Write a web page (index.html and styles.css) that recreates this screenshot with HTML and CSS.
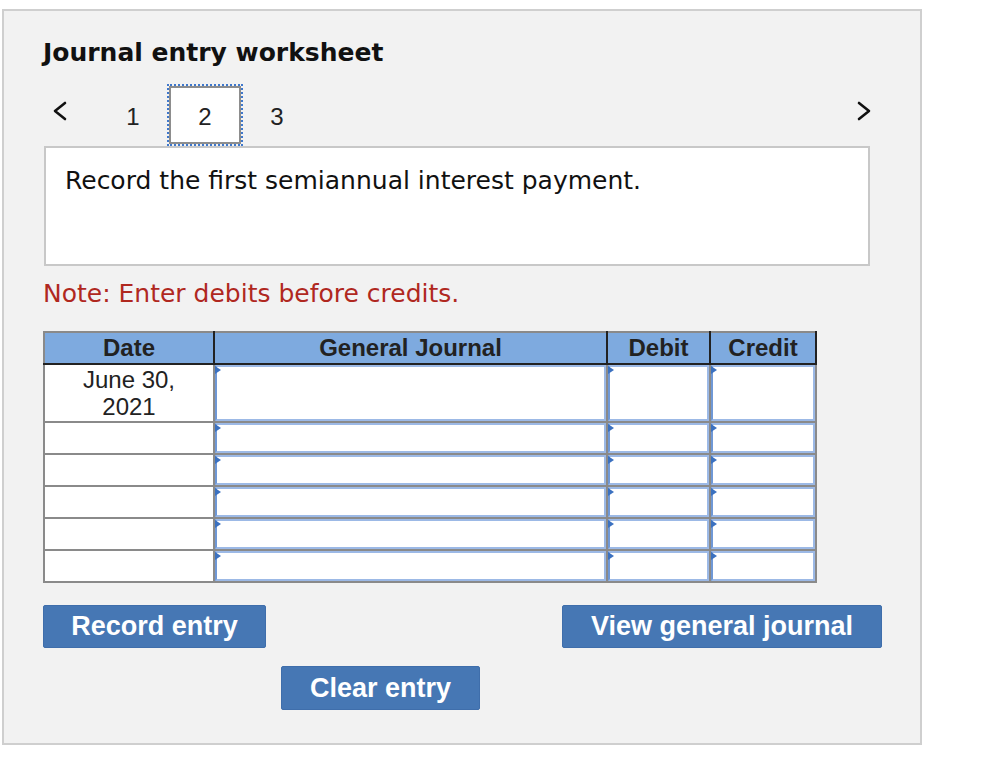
FILE: index.html
```html
<!DOCTYPE html>
<html>
<head>
<meta charset="utf-8">
<link rel="stylesheet" href="styles.css">
</head>
<body>
<div class="panel">
  <h1 class="title">Journal entry worksheet</h1>
  <div class="tabs">
    <span class="arrow prev"><svg width="16" height="20" viewBox="0 0 16 20"><path d="M13 2 L3 10 L13 18" fill="none" stroke="#111" stroke-width="2.6" stroke-linecap="round" stroke-linejoin="round"/></svg></span>
    <span class="tab">1</span>
    <span class="tab active">2</span>
    <span class="tab">3</span>
    <span class="arrow next"><svg width="16" height="20" viewBox="0 0 16 20"><path d="M3 2 L13 10 L3 18" fill="none" stroke="#111" stroke-width="2.6" stroke-linecap="round" stroke-linejoin="round"/></svg></span>
  </div>
  <div class="prompt">Record the first semiannual interest payment.</div>
  <p class="note">Note: Enter debits before credits.</p>
  <table class="journal">
    <colgroup>
      <col class="c-date"><col class="c-gj"><col class="c-dr"><col class="c-cr">
    </colgroup>
    <thead>
      <tr><th>Date</th><th>General Journal</th><th>Debit</th><th>Credit</th></tr>
    </thead>
    <tbody>
      <tr class="first"><td class="date">June 30,<br>2021</td><td><div class="inp"></div></td><td><div class="inp"></div></td><td><div class="inp"></div></td></tr>
      <tr><td class="date"></td><td><div class="inp"></div></td><td><div class="inp"></div></td><td><div class="inp"></div></td></tr>
      <tr><td class="date"></td><td><div class="inp"></div></td><td><div class="inp"></div></td><td><div class="inp"></div></td></tr>
      <tr><td class="date"></td><td><div class="inp"></div></td><td><div class="inp"></div></td><td><div class="inp"></div></td></tr>
      <tr><td class="date"></td><td><div class="inp"></div></td><td><div class="inp"></div></td><td><div class="inp"></div></td></tr>
      <tr><td class="date"></td><td><div class="inp"></div></td><td><div class="inp"></div></td><td><div class="inp"></div></td></tr>
    </tbody>
  </table>
  <div class="btn-row">
    <button class="btn record">Record entry</button>
    <button class="btn view">View general journal</button>
  </div>
  <div class="btn-row second">
    <button class="btn clear">Clear entry</button>
  </div>
</div>
</body>
</html>
```
FILE: styles.css
```css
html, body {
  margin: 0;
  padding: 0;
  background: #ffffff;
}
.panel {
  box-sizing: border-box;
  margin: 9px 0 0 2px;
  width: 920px;
  height: 736px;
  background: #f2f2f2;
  border: 2px solid #cfcfcf;
  padding: 0 0 0 39px;
}
.title {
  margin: 0;
  padding-top: 27px;
  font-family: "DejaVu Sans", Verdana, sans-serif;
  font-weight: bold;
  font-size: 25px;
  line-height: 30px;
  color: #111;
}
.tabs {
  display: flex;
  align-items: center;
  height: 60px;
  margin-top: 17px;
  width: 839px;
  font-family: "Liberation Sans", Arial, sans-serif;
  font-size: 24px;
  color: #222;
}
.arrow {
  display: flex;
  align-items: center;
}
.prev {
  width: 45px;
  padding-left: 9px;
  margin-top: -8px;
}
.next {
  margin-left: auto;
  margin-right: 10px;
  margin-top: -8px;
}
.tab {
  box-sizing: border-box;
  width: 72px;
  height: 58px;
  display: flex;
  align-items: center;
  justify-content: center;
  padding-top: 4px;
}
.tab.active {
  background: #fff;
  border: 2px solid #8d8d8d;
  outline: 2px dotted #3f78cc;
  outline-offset: 0px;
}
.prompt {
  box-sizing: border-box;
  width: 826px;
  height: 120px;
  margin-left: 1px;
  margin-top: 1px;
  background: #fff;
  border: 2px solid #c8c8c8;
  padding: 18px 0 0 19px;
  font-family: "DejaVu Sans", Verdana, sans-serif;
  font-size: 25px;
  line-height: 30px;
  color: #111;
}
.note {
  margin: 13px 0 0 0;
  font-family: "DejaVu Sans", Verdana, sans-serif;
  font-size: 25px;
  line-height: 30px;
  color: #b0281f;
}
.journal {
  margin-top: 22px;
  border-collapse: collapse;
  table-layout: fixed;
  width: 772px;
  font-family: "Liberation Sans", Arial, sans-serif;
  font-size: 24px;
  color: #222;
  background: #fff;
  border: 2px solid #8a8a8a;
}
.c-date { width: 170px; }
.c-gj { width: 393px; }
.c-dr { width: 103px; }
.c-cr { width: 106px; }
.journal th {
  background: #7eaadf;
  font-weight: bold;
  height: 30px;
  padding: 0;
  border: 2px solid #222;
  border-top-color: #8a8a8a;
  line-height: 28px;
  color: #222;
}
.journal th:first-child {
  border-left-color: #8a8a8a;
}
.journal td {
  border: 2px solid #8a8a8a;
  padding: 0;
  vertical-align: top;
}
.journal td.date {
  text-align: center;
  line-height: 27px;
  padding: 1px 0 0 0;
}
.inp {
  position: relative;
  box-sizing: border-box;
  height: 30px;
  border: 2px solid #9cb9e6;
  border-left-color: #6f98d6;
  background: #fff;
}
.journal tr.first .inp {
  height: 56px;
}
.inp::before {
  content: "";
  position: absolute;
  left: -2px;
  top: -1px;
  border-left: 6px solid #3b71c0;
  border-top: 4px solid transparent;
  border-bottom: 4px solid transparent;
}
.btn-row {
  display: flex;
  justify-content: space-between;
  width: 839px;
  margin-top: 22px;
}
.btn-row.second {
  justify-content: flex-start;
  margin-top: 18px;
}
.btn {
  box-sizing: border-box;
  height: 43px;
  border: 1px solid #3f6eab;
  border-radius: 2px;
  background: #4677b4;
  color: #fff;
  font-family: "Liberation Sans", Arial, sans-serif;
  font-weight: bold;
  font-size: 27px;
  padding: 0;
  cursor: pointer;
}
.record { width: 223px; }
.view { width: 320px; }
.clear { width: 199px; height: 44px; margin-left: 238px; }
```
